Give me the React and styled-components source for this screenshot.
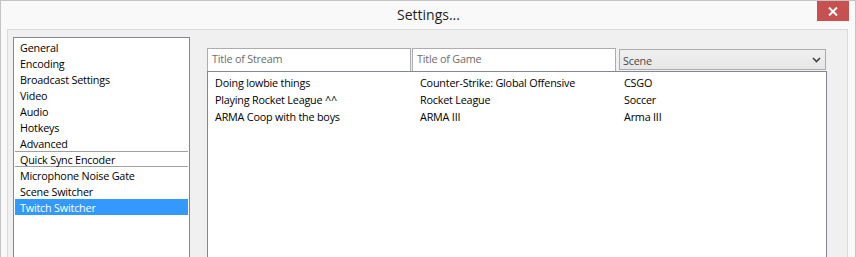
import styled, { createGlobalStyle } from "styled-components";

const GlobalStyle = createGlobalStyle`
    html, body {
        margin: 0;
        padding: 0;
        overflow: hidden;
        background: #f9f9f9;
    }
    * {
        box-sizing: border-box;
    }
`

const navItems = [
    { label: "General" },
    { label: "Encoding" },
    { label: "Broadcast Settings" },
    { label: "Video" },
    { label: "Audio" },
    { label: "Hotkeys" },
    { label: "Advanced" },
    { label: "Quick Sync Encoder", separated: true },
    { label: "Microphone Noise Gate" },
    { label: "Scene Switcher" },
    { label: "Twitch Switcher", selected: true },
]

const rows = [
    ["Doing lowbie things", "Counter-Strike: Global Offensive", "CSGO"],
    ["Playing Rocket League ^^", "Rocket League", "Soccer"],
    ["ARMA Coop with the boys", "ARMA III", "Arma III"],
]

const App = () =>{
    return(
        <>
            <GlobalStyle />
            <Window>
                <TitleBar>
                    <Title>Settings...</Title>
                    <CloseButton>
                        <svg width="10" height="9" viewBox="0 0 10 9">
                            <path d="M1 0.5 L9 8.5 M9 0.5 L1 8.5" stroke="#fff" strokeWidth="2" />
                        </svg>
                    </CloseButton>
                </TitleBar>
                <Client>
                    <Sidebar>
                        {navItems.map((item) => (
                            <NavItem
                                key={item.label}
                                $selected={item.selected}
                                $separated={item.separated}
                            >
                                {item.label}
                            </NavItem>
                        ))}
                    </Sidebar>
                    <Panel>
                        <HeaderRow>
                            <HeaderInput $width="204px">Title of Stream</HeaderInput>
                            <HeaderInput $width="204px" $gap="1px">Title of Game</HeaderInput>
                            <SceneSelect>
                                <span>Scene</span>
                                <svg width="9" height="6" viewBox="0 0 9 6">
                                    <path d="M1 1 L4.5 4.5 L8 1" stroke="#444" strokeWidth="1.7" fill="none" />
                                </svg>
                            </SceneSelect>
                        </HeaderRow>
                        <ListView>
                            {rows.map((row) => (
                                <Row key={row[0]}>
                                    {row.map((cell) => (
                                        <Cell key={cell}>{cell}</Cell>
                                    ))}
                                </Row>
                            ))}
                        </ListView>
                    </Panel>
                </Client>
            </Window>
        </>
    )
}

const Window = styled.div`
    width: 856px;
    height: 320px;
    background: #f9f9f9;
    border: 1px solid #c4c4c4;
    border-bottom: none;
    display: flex;
    flex-direction: column;
    padding: 0 7px 0 6px;
    font-family: "Open Sans", "Noto Sans", sans-serif;
`
const TitleBar = styled.div`
    height: 29px;
    display: flex;
    align-items: flex-start;
    justify-content: center;
    position: relative;
`
const Title = styled.div`
    font-size: 14px;
    color: #1e1e1e;
    line-height: 28px;
    margin-left: 2px;
`
const CloseButton = styled.div`
    position: absolute;
    top: 0;
    right: -1px;
    width: 32px;
    height: 20px;
    background: #c75050;
    display: flex;
    align-items: center;
    justify-content: center;
`
const Client = styled.div`
    flex: 1;
    background: #f0f0f0;
    border: 1px solid #dadada;
    display: flex;
    align-items: flex-start;
    padding: 7px 0 0 5px;
    gap: 17px;
`
const Sidebar = styled.div`
    width: 177px;
    height: 300px;
    background: #fff;
    border: 1px solid #828790;
    padding: 1px;
    display: flex;
    flex-direction: column;
`
const NavItem = styled.div`
    height: 16px;
    font-size: 10.8px;
    letter-spacing: -0.2px;
    padding-left: 5px;
    white-space: nowrap;
    color: ${(p) => (p.$selected ? "#fff" : "#000")};
    background: ${(p) => (p.$selected ? "#3399ff" : "transparent")};
    border-top: ${(p) => (p.$separated ? "1px solid #a0a0a0" : "none")};
    border-bottom: ${(p) => (p.$separated ? "1px solid #a0a0a0" : "none")};
    line-height: ${(p) => (p.$separated ? "15px" : "17px")};
`
const Panel = styled.div`
    width: 620px;
    margin-top: 11px;
    display: flex;
    flex-direction: column;
`
const HeaderRow = styled.div`
    display: flex;
    align-items: flex-start;
    height: 23px;
`
const HeaderInput = styled.div`
    width: ${(p) => p.$width};
    margin-left: ${(p) => p.$gap || "0"};
    height: 23px;
    background: #fff;
    border: 1px solid #abadb3;
    border-bottom: none;
    padding-left: 4px;
    font-size: 10.8px;
    letter-spacing: -0.2px;
    line-height: 20px;
    color: #6d6d6d;
    white-space: nowrap;
`
const SceneSelect = styled.div`
    width: 207px;
    margin-left: 3px;
    margin-top: 1px;
    height: 21px;
    border: 1px solid #acacac;
    background: linear-gradient(#f0f0f0, #e6e6e6);
    display: flex;
    align-items: center;
    justify-content: space-between;
    padding: 0 4px 0 3px;
    font-size: 10.8px;
    letter-spacing: -0.2px;
    color: #4a4a4a;
    span {
        margin-top: 2px;
    }
`
const ListView = styled.div`
    height: 300px;
    background: #fff;
    border: 1px solid #828790;
    padding: 2px 0 0 7px;
`
const Row = styled.div`
    display: grid;
    grid-template-columns: 205px 204px 1fr;
    height: 17px;
    line-height: 17px;
    font-size: 10.8px;
    letter-spacing: -0.2px;
    color: #000;
`
const Cell = styled.div`
    white-space: nowrap;
`

export default App;
